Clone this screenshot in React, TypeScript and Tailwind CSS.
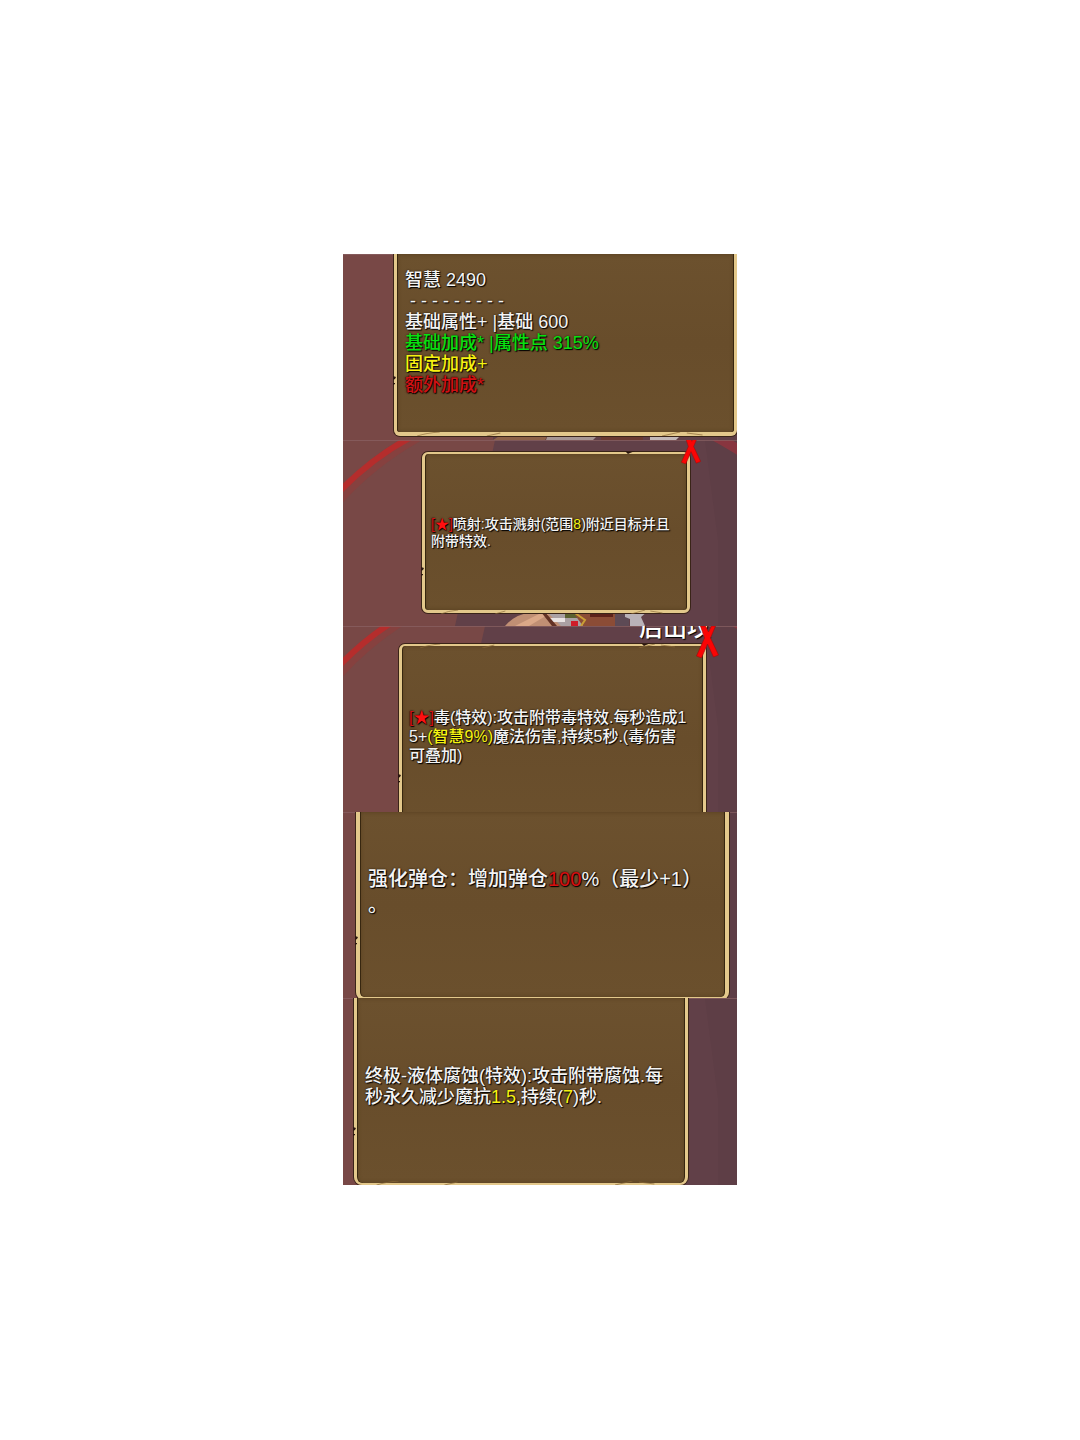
import type { ReactNode } from 'react';

const textBase =
  'relative whitespace-pre font-medium text-[#f4f4f4] [text-shadow:1px_1px_1px_#000,0_0_2px_#1a1208]';

const panelBase =
  'relative flex flex-col border-[#e3c88b] bg-linear-to-b from-[#6c512e] via-[#684d2b] to-[#6b502d] shadow-[0_0_0_1px_#3a2418,inset_1px_0_0_#37260f,inset_-1px_0_0_#37260f,inset_0_0_4px_#553e1f]';

const redOutline = '[text-shadow:1px_1px_1px_#000,0_0_1px_#600000,0_0_2px_#200000]';

const Ring = ({ shift = 0 }: { shift?: number }) => (
  <g transform={`translate(0 ${shift})`}>
    <path d="M-6 60 Q28 22 74 -4" fill="none" stroke="#9c3634" strokeWidth="12" opacity="0.4" />
    <path d="M-6 54 Q28 18 70 -4" fill="none" stroke="#c02828" strokeWidth="6" opacity="0.8" />
    <path d="M372 -4 Q385 3 402 14" fill="none" stroke="#a5303a" strokeWidth="10" opacity="0.6" />
  </g>
);

const Ground = ({ split, slant, children }: { split: number; slant: number; children?: ReactNode }) => (
  <svg
    className="absolute inset-0 h-full w-full"
    viewBox="0 0 394 186"
    preserveAspectRatio="none"
    aria-hidden="true"
  >
    <rect width="394" height="186" fill="#784846" />
    <polygon points={`${split},0 394,0 394,186 ${slant},186`} fill="#614048" />
    <polygon points="362,0 394,0 394,186 375,186 375,100" fill="#5e3e46" />
    {children}
    <rect width="394" height="1" fill="#8a6264" opacity="0.7" />
  </svg>
);

// worn spot on the left side of every frame
const Notch = ({ className }: { className: string }) => (
  <svg className={`absolute h-2.5 w-1.5 ${className}`} viewBox="0 0 6 10" aria-hidden="true">
    <path d="M0 0 L3 1 L2 3 L0 4 Z M0 7 L2 7 L2 8 L0 9 Z" fill="#2b160f" />
  </svg>
);

const Cracks = ({ className }: { className: string }) => (
  <svg className={`absolute h-1 w-full ${className}`} viewBox="0 0 300 4" preserveAspectRatio="none" aria-hidden="true">
    <path
      d="M18 4 Q26 1 38 0 M80 4 L92 1 M236 4 L252 0 M258 1 L272 3"
      fill="none"
      stroke="#8a6a38"
      opacity="0.7"
    />
  </svg>
);

const Chip = () => (
  <svg className="absolute -top-1 right-[52px] h-1 w-2.5" viewBox="0 0 10 4" aria-hidden="true">
    <path d="M0 1 L4 2 L10 1 L5 3 L3 4 Z" fill="#2b160f" />
  </svg>
);

const CloseButton = ({ className }: { className: string }) => (
  <button type="button" aria-label="关闭" className={`absolute ${className}`}>
    <svg className="h-full w-full" viewBox="0 0 22 32" aria-hidden="true">
      <path
        d="M4 0 L9 0 L12 6 L15 0 L19 0 L14 12 L22 29 L17 31 L11 18 L5 32 L0 30 L8 12 Z"
        fill="#fa0505"
        stroke="#a30a0a"
        strokeWidth="0.6"
      />
    </svg>
  </button>
);

const Star = () => (
  <span className={`text-[#d01214] ${redOutline}`}>
    [<span className="text-[#ff1010]">★</span>]
  </span>
);

const Yellow = ({ children }: { children: ReactNode }) => <span className="text-[#f7f312]">{children}</span>;

const App = () => {
  return (
    <main
      lang="zh-CN"
      className="flex min-h-screen justify-center bg-white py-[254px] font-['Liberation_Sans','Noto_Sans_CJK_SC',sans-serif]"
    >
      <div className="w-full max-w-[394px]">
        <section className="relative flex h-[186px] items-start overflow-hidden pl-[51px]">
          <Ground split={150} slant={150}>
            <path d="M150 186 L158 181 L205 181 L202 186 Z" fill="#8d6249" />
            <path d="M205 181 L255 181 L250 186 L203 186 Z" fill="#a59593" />
            <path d="M258 181 H300 V186 H258 Z" fill="#6a3a32" />
            <path d="M307 181 H338 L333 186 H307 Z" fill="#c2b8b8" />
          </Ground>
          <div className={`${panelBase} h-[182px] w-full rounded-b-md border-x-[3px] border-b-4 px-2 pt-4`}>
            <Notch className="top-[122px] -left-1" />
            <Cracks className="-bottom-1 left-0" />
            <div className={`${textBase} text-[18px] leading-[21px]`}>
              <h2 className="font-medium">智慧 2490</h2>
              <p> - - - - - - - - -</p>
              <p>基础属性+ |基础 600</p>
              <p className="text-[#08e010]">基础加成* |属性点 315%</p>
              <p className="text-[#f7f312]">固定加成+</p>
              <p className={`text-[#d01214] ${redOutline}`}>额外加成*</p>
            </div>
          </div>
        </section>

        <section className="relative flex h-[186px] items-start overflow-hidden pt-3 pl-[79px]">
          <Ground split={152} slant={112}>
            <Ring />
            <path d="M162 186 Q172 174 190 172 H224 L236 186 Z" fill="#c08f74" />
            <path d="M172 186 L200 172 L206 174 L186 186 Z" fill="#dba888" />
            <path d="M204 172 H250 V186 H218 Z" fill="#aaa0a3" />
            <path d="M206 178 H222 V182 H206 Z" fill="#e9e3e2" />
            <path d="M198 172 H202 L214 186 H209 Z" fill="#633225" />
            <path d="M222 172 H234 V178 H222 Z" fill="#5b6130" />
            <path d="M232 175 L244 172 H272 V186 H240 Z" fill="#8b4c36" />
            <path d="M232 173 L242 180 L238 186" fill="none" stroke="#c99e35" strokeWidth="2" />
            <path d="M247 173 H270 V177 H247 Z" fill="#5c221b" />
            <path d="M228 181 H235 V186 H228 Z" fill="#cf1d29" />
            <path d="M272 172 H286 V186 H272 Z" fill="#5d4a55" />
            <path d="M282 172 H304 L298 177 L302 186 H287 V179 L282 177 Z" fill="#b9b2b8" />
          </Ground>
          <div className={`${panelBase} h-[161px] w-[268px] justify-center rounded-md border-x-[3px] border-t-2 border-b-[3px] px-1.5 pt-0.5`}>
            <Notch className="top-[113px] -left-1" />
            <Chip />
            <Cracks className="-bottom-1 left-0" />
            <p className={`${textBase} text-[14px] leading-[17px]`}>
              <Star />喷射:攻击溅射(范围<Yellow>8</Yellow>)附近目标并且<br />
              附带特效.
            </p>
          </div>
          <CloseButton className="-top-1 left-[338px] h-7 w-5" />
        </section>

        <section className="relative flex h-[186px] items-start overflow-hidden pt-[18px] pl-14">
          <Ground split={142} slant={100}>
            <Ring shift={-12} />
          </Ground>
          <div className={`${panelBase} h-[188px] w-[307px] rounded-t-md border-x-[3px] border-t-2 px-[7px] pt-[62px]`}>
            <Notch className="top-[128px] -left-1" />
            <Chip />
            <Cracks className="-top-0.5 left-0" />
            <p className={`${textBase} text-[16px] leading-[19px]`}>
              <Star />毒(特效):攻击附带毒特效.每秒造成1<br />
              5+<Yellow>(智慧9%)</Yellow>魔法伤害,持续5秒.(毒伤害<br />
              可叠加)
            </p>
          </div>
          <span className="absolute -top-2.5 left-[296px] text-[24px] leading-6 font-medium whitespace-nowrap text-white [text-shadow:1px_1px_1px_#000]">
            后山坟
          </span>
          <CloseButton className="top-0 left-[353px] h-8 w-[23px]" />
        </section>

        <section className="relative flex h-[186px] items-start overflow-hidden pl-[13px]">
          <Ground split={150} slant={150} />
          <div className={`${panelBase} h-[188px] w-[373px] rounded-b-lg border-x-4 border-b-[3px] px-2 pt-[54px]`}>
            <Notch className="top-[124px] -left-[5px]" />
            <p className={`${textBase} text-[20px] leading-[26px]`}>
              强化弹仓：增加弹仓<span className={`text-[#d51010] ${redOutline}`}>100</span>%（最少+1）<br />
              。
            </p>
          </div>
        </section>

        <section className="relative flex h-[187px] items-start overflow-hidden pl-[11px]">
          <Ground split={150} slant={150} />
          <div className={`${panelBase} h-[187px] w-[334px] rounded-b-lg border-x-[3px] border-b-2 px-2 pt-[68px]`}>
            <Notch className="top-[129px] -left-1" />
            <Cracks className="-bottom-0.5 left-0" />
            <p className={`${textBase} text-[18px] leading-[21px]`}>
              终极-液体腐蚀(特效):攻击附带腐蚀.每<br />
              秒永久减少魔抗<Yellow>1.5</Yellow>,持续(<Yellow>7</Yellow>)秒.
            </p>
          </div>
        </section>
      </div>
    </main>
  );
};

export default App;
